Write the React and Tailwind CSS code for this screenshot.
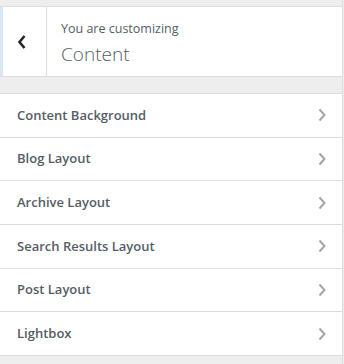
const items = [
    'Content Background',
    'Blog Layout',
    'Archive Layout',
    'Search Results Layout',
    'Post Layout',
    'Lightbox',
];

const Chevron = ({ dir = 'right', className }) => (
    <svg width="10" height="14" viewBox="0 0 10 14" className={className}>
        {dir === 'right' ? (
            <path d="M2.5 1.5 L7.5 7 L2.5 12.5" fill="none" stroke="currentColor" strokeWidth="2" />
        ) : (
            <path d="M7.5 1 L2.5 7 L7.5 13" fill="none" stroke="currentColor" strokeWidth="2.6" />
        )}
    </svg>
);

export default function App() {
    return (
        <div
            className="w-[344px] h-[364px] bg-[#eeeeee] overflow-hidden"
            style={{ fontFamily: '"Open Sans", "Noto Sans", sans-serif' }}
        >
            <div className="w-[343px] h-full border-r border-[#dddddd] pt-[6px]">
                <div className="flex h-[71px] bg-white border-y border-[#dddddd]">
                    <div className="w-[47px] flex items-center border-r border-[#dddddd] border-l-[3px] border-l-[#d9e5f0]">
                        <Chevron dir="left" className="ml-[14px] mt-[1px] text-[#23282d]" />
                    </div>
                    <div className="flex flex-col pl-[14px] pt-[12px]">
                        <span className="text-[12.5px] leading-[20px] text-[#555d66]">You are customizing</span>
                        <span className="text-[19px] leading-[28px] font-light text-[#555d66] mt-[1px]">Content</span>
                    </div>
                </div>
                <div className="h-[16px]" />
                <div className="border-t border-[#dddddd] bg-white">
                    {items.map((item) => (
                        <div
                            key={item}
                            className="flex items-center justify-between h-[43.7px] border-b border-[#dddddd] pl-[17px] pr-[15px]"
                        >
                            <span className="text-[13px] font-semibold text-[#555d66]">{item}</span>
                            <Chevron className="text-[#a0a5aa]" />
                        </div>
                    ))}
                </div>
            </div>
        </div>
    );
}
